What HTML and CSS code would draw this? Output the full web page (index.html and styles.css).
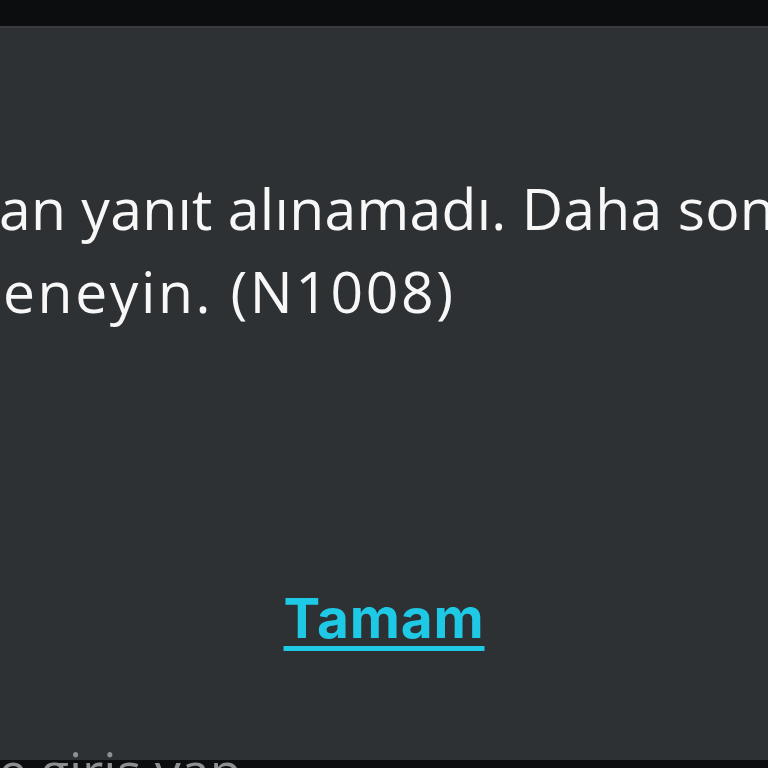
FILE: index.html
```html
<!DOCTYPE html>
<html lang="tr">
<head>
<meta charset="utf-8">
<link rel="stylesheet" href="styles.css">
</head>
<body>
<div class="topbar"></div>
<div class="dialog">
  <div class="message">
    <div class="line line1">an yanıt alınamadı. Daha sonra</div>
    <div class="line line2">eneyin. (N1008)</div>
  </div>
  <div class="actions">
    <span class="ok">Tamam</span>
  </div>
</div>
<div class="behind">e giriş yap</div>
</body>
</html>
```
FILE: styles.css
```css
html, body {
  margin: 0;
  padding: 0;
  width: 768px;
  height: 768px;
  overflow: hidden;
  background: #0c0d0e;
  font-family: "Open Sans", Inter, sans-serif;
  position: relative;
}
.topbar {
  height: 26px;
  background: #0c0d0e;
}
.dialog {
  height: 732px;
  background: #2e3134;
  border-top: 2px solid #393b3e;
  display: flex;
  flex-direction: column;
  position: relative;
  z-index: 1;
}
.message {
  padding-top: 139px;
  color: #f7f7f7;
  font-size: 57px;
  line-height: 83px;
  white-space: nowrap;
  overflow: hidden;
}
.line1 { margin-left: -1px; letter-spacing: 0.3px; }
.line2 { margin-left: 3px; letter-spacing: 2.6px; }
.actions {
  margin-top: 255px;
  display: flex;
  justify-content: center;
}
.ok {
  color: #1ec9e6;
  font-family: Inter, sans-serif;
  font-weight: 700;
  font-size: 55px;
  line-height: 60px;
  letter-spacing: 0.8px;
  text-decoration: underline;
  text-decoration-thickness: 5px;
  text-underline-offset: 8px;
}
.behind {
  position: absolute;
  z-index: 2;
  top: 744px;
  left: -2px;
  color: #8e8f90;
  font-size: 52px;
  line-height: 1;
  white-space: nowrap;
}
```
